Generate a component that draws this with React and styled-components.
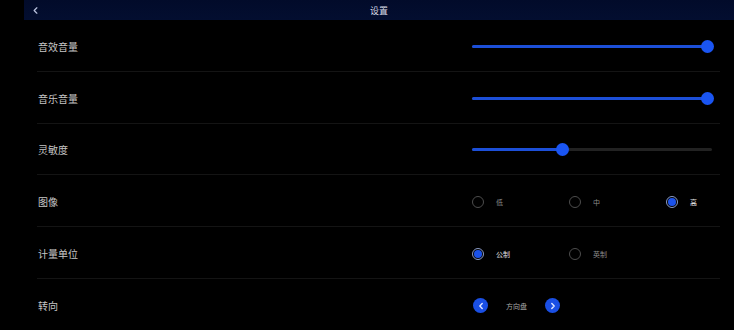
import React, { useState } from "react";
import styled, { createGlobalStyle } from "styled-components";

const GlobalStyle = createGlobalStyle`
  html, body {
    margin: 0;
    padding: 0;
    background: #000;
  }
  body {
    font-family: "Noto Sans CJK SC", "Noto Sans", sans-serif;
  }
`;

const Page = styled.div`
  width: 734px;
  height: 330px;
  overflow: hidden;
  background: #000;
  padding-left: 24px;
  box-sizing: border-box;
`;

const Header = styled.div`
  height: 20px;
  background: linear-gradient(#020b2a, #030e30);
  display: grid;
  grid-template-columns: 24px 1fr 24px;
  align-items: center;
`;

const BackButton = styled.button`
  background: none;
  border: none;
  padding: 0 0 0 7px;
  display: flex;
  align-items: center;
  color: #b8c0dc;
  cursor: pointer;
`;

const Title = styled.div`
  text-align: center;
  color: #d8dbe6;
  font-size: 9px;
`;

const List = styled.div`
  margin: 0 14px 0 13px;
`;

const Row = styled.div`
  height: 51.8px;
  box-sizing: border-box;
  display: grid;
  grid-template-columns: 435px 1fr;
  align-items: center;
  border-bottom: ${(p) => (p.$last ? "none" : "1px solid #141414")};
  padding-top: 2px;
`;

const Label = styled.div`
  color: #c6c6c6;
  font-size: 10px;
  padding-left: 1px;
`;

const Track = styled.div`
  position: relative;
  width: 240px;
  height: 3px;
  border-radius: 2px;
  background: #222;
`;

const Fill = styled.div`
  height: 100%;
  border-radius: 2px;
  background: #1c4fd8;
`;

const Thumb = styled.div`
  position: absolute;
  top: 50%;
  width: 13px;
  height: 13px;
  margin: -6.5px 0 0 -6.5px;
  border-radius: 50%;
  background: #1a55f2;
`;

const Options = styled.div`
  display: flex;
`;

const Option = styled.label`
  width: 97px;
  display: flex;
  align-items: center;
  gap: 12px;
  cursor: pointer;
`;

const Radio = styled.span`
  width: 12px;
  height: 12px;
  box-sizing: border-box;
  border-radius: 50%;
  border: 1px solid ${(p) => (p.$on ? "#8b9cc8" : "#4d4d4d")};
  display: flex;
  align-items: center;
  justify-content: center;
  &::after {
    content: "";
    width: 8px;
    height: 8px;
    border-radius: 50%;
    background: ${(p) => (p.$on ? "#1b52ea" : "transparent")};
  }
`;

const OptionText = styled.span`
  font-size: 7px;
  color: ${(p) => (p.$on ? "#e4e4e4" : "#8c8c8c")};
`;

const Stepper = styled.div`
  display: flex;
  align-items: center;
  padding-left: 1px;
`;

const RoundButton = styled.button`
  width: 15px;
  height: 15px;
  padding: 0;
  border: none;
  border-radius: 50%;
  background: #1a4fe4;
  color: #dfe6ff;
  display: flex;
  align-items: center;
  justify-content: center;
  cursor: pointer;
`;

const StepValue = styled.span`
  width: 57px;
  text-align: center;
  font-size: 7px;
  color: #a8a8a8;
`;

function Chevron({ dir = "left", size = 8, w = 1.6 }) {
  const d = dir === "left" ? "M6.5 2 L3.5 5 L6.5 8" : "M3.5 2 L6.5 5 L3.5 8";
  return (
    <svg width={size} height={size} viewBox="0 0 10 10">
      <path d={d} fill="none" stroke="currentColor" strokeWidth={w} strokeLinecap="round" strokeLinejoin="round" />
    </svg>
  );
}

function Slider({ value }) {
  const pos = 6 + (229 * value) / 100;
  return (
    <Track>
      <Fill style={{ width: pos }} />
      <Thumb style={{ left: pos }} />
    </Track>
  );
}

function RadioGroup({ options, value, onChange }) {
  return (
    <Options>
      {options.map((o) => (
        <Option key={o} onClick={() => onChange(o)}>
          <Radio $on={o === value} />
          <OptionText $on={o === value}>{o}</OptionText>
        </Option>
      ))}
    </Options>
  );
}

export default function App() {
  const [quality, setQuality] = useState("高");
  const [unit, setUnit] = useState("公制");

  return (
    <>
      <GlobalStyle />
      <Page>
        <Header>
          <BackButton>
            <Chevron size={9} w={1.4} />
          </BackButton>
          <Title>设置</Title>
          <span />
        </Header>
        <List>
          <Row>
            <Label>音效音量</Label>
            <Slider value={100} />
          </Row>
          <Row>
            <Label>音乐音量</Label>
            <Slider value={100} />
          </Row>
          <Row>
            <Label>灵敏度</Label>
            <Slider value={37} />
          </Row>
          <Row>
            <Label>图像</Label>
            <RadioGroup options={["低", "中", "高"]} value={quality} onChange={setQuality} />
          </Row>
          <Row>
            <Label>计量单位</Label>
            <RadioGroup options={["公制", "英制"]} value={unit} onChange={setUnit} />
          </Row>
          <Row $last>
            <Label>转向</Label>
            <Stepper>
              <RoundButton>
                <Chevron dir="left" size={8} w={1.8} />
              </RoundButton>
              <StepValue>方向盘</StepValue>
              <RoundButton>
                <Chevron dir="right" size={8} w={1.8} />
              </RoundButton>
            </Stepper>
          </Row>
        </List>
      </Page>
    </>
  );
}
